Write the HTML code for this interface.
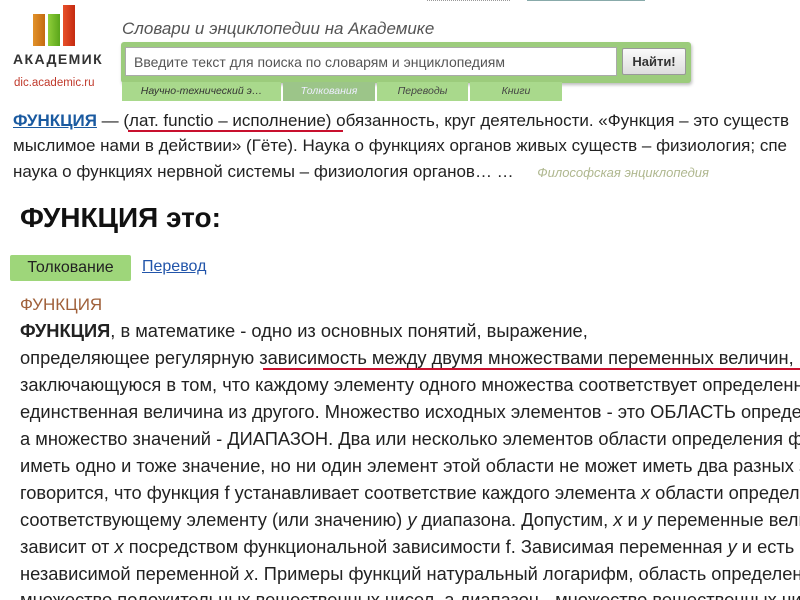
<!DOCTYPE html>
<html><head><meta charset="utf-8"><style>
*{margin:0;padding:0;box-sizing:border-box}
html,body{width:800px;height:600px;overflow:hidden}
body{background:#fff;font-family:"Liberation Sans","DejaVu Sans",sans-serif;position:relative;color:#222}
#w{position:absolute;left:0;top:0;width:800px;height:600px;overflow:hidden}
.a{position:absolute;white-space:nowrap}
.l{position:absolute;left:20px;white-space:nowrap;font-size:18.3px;line-height:20px;color:#222}
i{font-style:italic}
.red{position:absolute;height:2px;background:#c8102e}
</style></head><body><div id="w">
<div class="a" style="left:33px;top:14px;width:12px;height:32px;background:linear-gradient(90deg,#e2922a,#c46a10)"></div>
<div class="a" style="left:48px;top:14px;width:12px;height:32px;background:linear-gradient(90deg,#8fce3a,#5aa51a)"></div>
<div class="a" style="left:63px;top:5px;width:12px;height:41px;background:linear-gradient(90deg,#e8502a,#c42a10)"></div>
<div class="a" style="left:13px;top:51px;font-size:14px;font-weight:bold;letter-spacing:1.4px;color:#333">АКАДЕМИК</div>
<div class="a" style="left:14px;top:77px;font-size:11.5px;color:#c0392b">dic.academic.ru</div>
<div class="a" style="left:427px;top:0;width:83px;border-top:1px dotted #999"></div>
<div class="a" style="left:527px;top:0;width:118px;border-top:1px solid #8aa"></div>
<div class="a" style="left:122px;top:19px;font-size:17px;font-style:italic;color:#555">Словари и энциклопедии на Академике</div>
<div class="a" style="left:121px;top:42px;width:570px;height:41px;background:#9ccc7c;border-radius:3px;box-shadow:1px 2px 3px #bbb"></div>
<div class="a" style="left:125px;top:47px;width:492px;height:29px;background:#fff;border:1px solid #aaa;font-size:14px;color:#555;padding:6px 8px">Введите текст для поиска по словарям и энциклопедиям</div>
<div class="a" style="left:622px;top:48px;width:64px;height:27px;background:linear-gradient(#fafafa,#ddd);border:1px solid #999;border-radius:2px;font-size:13px;font-weight:bold;color:#333;text-align:center;line-height:25px">Найти!</div>
<div class="a" style="left:122px;top:82px;width:159px;height:19px;background:#a9d98c;font-size:10.5px;font-style:italic;color:#333;text-align:center;line-height:19px">Научно-технический э…</div>
<div class="a" style="left:283px;top:82px;width:92px;height:19px;background:#9cc589;font-size:10.5px;font-style:italic;color:#eef;text-align:center;line-height:19px">Толкования</div>
<div class="a" style="left:377px;top:82px;width:91px;height:19px;background:#a9d98c;font-size:10.5px;font-style:italic;color:#444;text-align:center;line-height:19px">Переводы</div>
<div class="a" style="left:470px;top:82px;width:92px;height:19px;background:#a9d98c;font-size:10.5px;font-style:italic;color:#444;text-align:center;line-height:19px">Книги</div>
<div class="a" style="left:13px;top:111px;font-size:17px;line-height:20px"><b style="color:#1a5aa0;text-decoration:underline">ФУНКЦИЯ</b> — (лат. functio – исполнение) обязанность, круг деятельности. «Функция – это существ</div>
<div class="red" style="left:128px;top:130px;width:215px"></div>
<div class="a" style="left:13px;top:136px;font-size:17px;line-height:20px">мыслимое нами в действии» (Гёте). Наука о функциях органов живых существ – физиология; спе</div>
<div class="a" style="left:13px;top:162px;font-size:17px;line-height:20px">наука о функциях нервной системы – физиология органов… …&nbsp;&nbsp;&nbsp;&nbsp;&nbsp;<span style="font-size:13px;font-style:italic;color:#b0b890">Философская энциклопедия</span></div>
<div class="a" style="left:20px;top:202px;font-size:28px;font-weight:bold;color:#111">ФУНКЦИЯ это:</div>
<div class="a" style="left:10px;top:255px;width:121px;height:26px;background:#9ed67a;border-radius:2px;font-size:16px;line-height:26px;text-align:center;color:#222">Толкование</div>
<div class="a" style="left:142px;top:258px;font-size:16px;color:#2255aa;text-decoration:underline">Перевод</div>
<div class="a" style="left:20px;top:295px;font-size:17px;color:#a0603a">ФУНКЦИЯ</div>
<div class="l" style="top:321px"><b>ФУНКЦИЯ</b>, в математике - одно из основных понятий, выражение,</div>
<div class="l" style="top:348px">определяющее регулярную зависимость между двумя множествами переменных величин,</div>
<div class="red" style="left:263px;top:368px;width:537px"></div>
<div class="l" style="top:375px">заключающуюся в том, что каждому элементу одного множества соответствует определенная</div>
<div class="l" style="top:402px">единственная величина из другого. Множество исходных элементов - это ОБЛАСТЬ определения,</div>
<div class="l" style="top:429px">а множество значений - ДИАПАЗОН. Два или несколько элементов области определения функции</div>
<div class="l" style="top:456px">иметь одно и тоже значение, но ни один элемент этой области не может иметь два разных значения</div>
<div class="l" style="top:483px">говорится, что функция f устанавливает соответствие каждого элемента <i>x</i> области определения</div>
<div class="l" style="top:510px">соответствующему элементу (или значению) <i>y</i> диапазона. Допустим, <i>x</i> и <i>y</i> переменные величины</div>
<div class="l" style="top:537px">зависит от <i>x</i> посредством функциональной зависимости f. Зависимая переменная <i>y</i> и есть функция</div>
<div class="l" style="top:564px">независимой переменной <i>x</i>. Примеры функций натуральный логарифм, область определения</div>
<div class="l" style="top:590px">множество положительных вещественных чисел, а диапазон - множество вещественных чисел</div>
</div></body></html>
